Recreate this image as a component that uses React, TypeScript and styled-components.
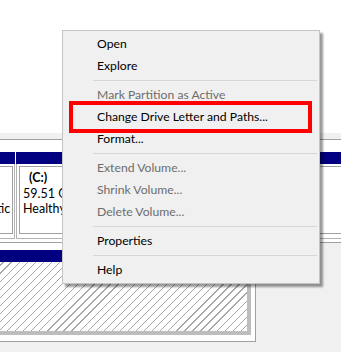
import React from 'react';
import styled, { createGlobalStyle } from 'styled-components';

const GlobalStyle = createGlobalStyle`
  html, body {
    margin: 0;
    padding: 0;
    background: #f0f0f0;
  }
  body {
    font-family: Lato, "Open Sans", sans-serif;
    font-size: 12px;
    color: #000;
  }
`;

const Screen = styled.div`
  position: relative;
  width: 341px;
  height: 352px;
  overflow: hidden;
  background: #f0f0f0;
`;

const VolumeList = styled.div`
  height: 133px;
  background: #fff;
`;

const Splitter = styled.div`
  height: 6px;
  background: #f0f0f0;
`;

const GraphPane = styled.div`
  border-top: 1px solid #a0a0a0;
  display: flex;
  flex-direction: column;
`;

const DiskRow = styled.div<{ $width?: number; $pad: number; $height: number }>`
  box-sizing: border-box;
  height: ${({ $height }) => $height}px;
  background: #fff;
  padding-top: ${({ $pad }) => $pad}px;
  width: ${({ $width }) => ($width ? `${$width}px` : 'auto')};
  border-bottom: 1px solid #a0a0a0;
  border-right: ${({ $width }) => ($width ? '1px solid #a0a0a0' : 'none')};
  overflow: hidden;
`;

const DiskStrip = styled.div<{ $shift: number }>`
  display: flex;
  gap: 1px;
  margin-left: ${({ $shift }) => $shift}px;
`;

const Partition = styled.div<{ $width: number }>`
  flex: none;
  width: ${({ $width }) => $width}px;
  display: flex;
  flex-direction: column;
`;

const PartHeader = styled.div`
  height: 12px;
  background: #000080;
`;

const PartBody = styled.div`
  height: 75px;
  box-sizing: border-box;
  padding: 2px 1px 4px 2px;
  border: 1px solid #b4b4b4;
  border-top: none;
`;

const PartInner = styled.div`
  height: 100%;
  box-sizing: border-box;
  border: 1px solid #a0a0a0;
  padding: 3px 3px 0;
  font-size: 12.5px;
  line-height: 15.5px;
  white-space: nowrap;
  overflow: hidden;
  color: #000;
`;

const PartLine = styled.div<{ $bold?: boolean }>`
  height: 15.5px;
  font-weight: ${({ $bold }) => ($bold ? 700 : 400)};
  padding-left: ${({ $bold }) => ($bold ? 6 : 0)}px;
`;

const FreeSpace = styled.div`
  height: 73px;
  box-sizing: border-box;
  border-right: 4px solid #bdbdbd;
  border-bottom: 4px solid #bdbdbd;
  background: repeating-linear-gradient(
    135deg,
    #ffffff 0 4.8px,
    #a6a6a6 4.8px 5.7px
  );
`;

const Menu = styled.div`
  position: absolute;
  left: 62px;
  top: 30px;
  width: 258px;
  box-sizing: border-box;
  padding: 2px 0;
  background: #f0f0f0;
  border: 1px solid #c4c4c4;
  box-shadow: 3px 3px 2px rgba(0, 0, 0, 0.4);
`;

const MenuItem = styled.div<{ $disabled?: boolean }>`
  position: relative;
  height: 22px;
  line-height: 22px;
  padding-left: 34px;
  font-size: 12.2px;
  color: ${({ $disabled }) => ($disabled ? '#6d6d6d' : '#000')};
`;

const MenuSeparator = styled.div`
  height: 7px;
  display: flex;
  align-items: center;
  padding: 0 2px 0 30px;

  &::after {
    content: '';
    flex: 1;
    height: 1px;
    background: #d7d7d7;
  }
`;

const Highlight = styled.div`
  position: absolute;
  left: 6px;
  right: 7px;
  top: -5px;
  bottom: -5px;
  border: 4px solid #ff0000;
`;

type Entry = { label?: string; disabled?: boolean; marked?: boolean };

const entries: Entry[] = [
  { label: 'Open' },
  { label: 'Explore' },
  {},
  { label: 'Mark Partition as Active', disabled: true },
  { label: 'Change Drive Letter and Paths...', marked: true },
  { label: 'Format...' },
  {},
  { label: 'Extend Volume...', disabled: true },
  { label: 'Shrink Volume...', disabled: true },
  { label: 'Delete Volume...', disabled: true },
  {},
  { label: 'Properties' },
  {},
  { label: 'Help' },
];

export default function App() {
  return (
    <>
      <GlobalStyle />
      <Screen>
        <VolumeList />
        <Splitter />
        <GraphPane>
          <DiskRow $pad={12} $height={103}>
            <DiskStrip $shift={-55}>
              <Partition $width={70}>
                <PartHeader />
                <PartBody>
                  <PartInner>
                    <PartLine $bold>&nbsp;</PartLine>
                    <PartLine>&nbsp;</PartLine>
                    <PartLine>Diagnostic</PartLine>
                  </PartInner>
                </PartBody>
              </Partition>
              <Partition $width={420}>
                <PartHeader />
                <PartBody>
                  <PartInner>
                    <PartLine $bold>(C:)</PartLine>
                    <PartLine>59.51 GB NTFS</PartLine>
                    <PartLine>Healthy (Boot, Page File, Primary)</PartLine>
                  </PartInner>
                </PartBody>
              </Partition>
            </DiskStrip>
          </DiskRow>
          <DiskRow $pad={7} $width={256} $height={99}>
            <DiskStrip $shift={-20}>
              <Partition $width={271}>
                <PartHeader />
                <FreeSpace />
              </Partition>
            </DiskStrip>
          </DiskRow>
        </GraphPane>
        <Menu>
          {entries.map((e, i) =>
            e.label ? (
              <MenuItem key={i} $disabled={e.disabled}>
                {e.label}
                {e.marked && <Highlight />}
              </MenuItem>
            ) : (
              <MenuSeparator key={i} />
            )
          )}
        </Menu>
      </Screen>
    </>
  );
}
